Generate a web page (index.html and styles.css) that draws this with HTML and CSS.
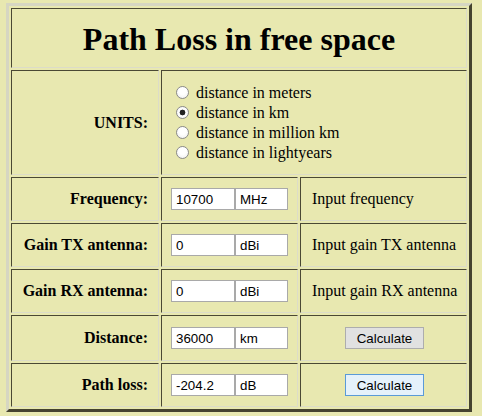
FILE: index.html
```html
<!DOCTYPE html>
<html>
<head>
<meta charset="utf-8">
<title>Path Loss in free space</title>
<link rel="stylesheet" href="styles.css">
</head>
<body>
<table class="calc">
  <tr>
    <td colspan="3" class="title"><h1>Path Loss in free space</h1></td>
  </tr>
  <tr class="units-row">
    <td class="label">UNITS:</td>
    <td colspan="2" class="units">
      <label class="opt"><input type="radio" name="u" class="radio"><span>distance in meters</span></label>
      <label class="opt"><input type="radio" name="u" class="radio" checked><span>distance in km</span></label>
      <label class="opt"><input type="radio" name="u" class="radio"><span>distance in million km</span></label>
      <label class="opt"><input type="radio" name="u" class="radio"><span>distance in lightyears</span></label>
    </td>
  </tr>
  <tr class="row">
    <td class="label c1">Frequency:</td>
    <td class="field c2"><input class="num" type="text" value="10700"><input class="unit" type="text" value="MHz"></td>
    <td class="info c3">Input frequency</td>
  </tr>
  <tr class="row">
    <td class="label">Gain TX antenna:</td>
    <td class="field"><input class="num" type="text" value="0"><input class="unit" type="text" value="dBi"></td>
    <td class="info">Input gain TX antenna</td>
  </tr>
  <tr class="row">
    <td class="label">Gain RX antenna:</td>
    <td class="field"><input class="num" type="text" value="0"><input class="unit" type="text" value="dBi"></td>
    <td class="info">Input gain RX antenna</td>
  </tr>
  <tr class="row row-tall">
    <td class="label">Distance:</td>
    <td class="field"><input class="num" type="text" value="36000"><input class="unit" type="text" value="km"></td>
    <td class="action"><button class="btn" type="button">Calculate</button></td>
  </tr>
  <tr class="row">
    <td class="label">Path loss:</td>
    <td class="field"><input class="num" type="text" value="-204.2"><input class="unit" type="text" value="dB"></td>
    <td class="action"><button class="btn btn-focus" type="button">Calculate</button></td>
  </tr>
</table>
</body>
</html>
```
FILE: styles.css
```css
html, body {
  background: #e8e8b0;
}
body {
  margin: 3px 0 0 6px;
  font-family: "Liberation Serif", "Times New Roman", serif;
  font-size: 16px;
  color: #000;
}
.calc {
  border-collapse: separate;
  border-spacing: 2px;
  border-style: solid;
  border-width: 3px;
  border-color: #d6d6c2 #45432f #45432f #d6d6c2;
  background: #e8e8b0;
}
.calc td {
  box-sizing: border-box;
  border: 1px solid;
  border-color: #4a4834 #dcdcc8 #dcdcc8 #4a4834;
  padding: 0;
  vertical-align: middle;
}
.title {
  height: 60px;
  text-align: center;
}
.title h1 {
  margin: 0;
  padding-top: 2px;
  font-size: 32px;
  font-weight: bold;
  line-height: 36px;
}
.units-row td {
  height: 105px;
}
.row td {
  height: 44px;
}
.row-tall td {
  height: 46px;
}
.c1 { width: 148px; }
.c2 { width: 137px; }
.c3 { width: 167px; }
.label {
  text-align: right;
  font-weight: bold;
  padding-right: 10px !important;
}
.units {
  padding-left: 14px !important;
  padding-top: 1px !important;
}
.opt {
  display: flex;
  align-items: center;
  height: 20px;
  line-height: 20px;
}
.radio {
  -webkit-appearance: none;
  appearance: none;
  box-sizing: border-box;
  width: 13px;
  height: 13px;
  margin: 0 7px 0 0;
  border: 1px solid #8a8a8a;
  border-radius: 50%;
  background: radial-gradient(circle at 50% 35%, #ffffff 40%, #ececec 100%);
  position: relative;
  top: -1px;
}
.radio:checked {
  background: radial-gradient(circle, #222 0, #222 2.6px, #ffffff 3.2px, #f2f2f2 100%);
}
.field {
  padding-left: 9px !important;
  white-space: nowrap;
  font-size: 0;
}
.num, .unit {
  box-sizing: border-box;
  height: 22px;
  margin: 0;
  border: 1px solid #a9a9a9;
  background: #fff;
  padding: 0 4px;
  font-family: "Liberation Sans", Arial, sans-serif;
  font-size: 13.33px;
  color: #000;
  vertical-align: middle;
}
.num { width: 64px; }
.unit { width: 53px; }
.info {
  padding-left: 11px !important;
  text-align: left;
}
.action {
  text-align: center;
}
.btn {
  box-sizing: border-box;
  width: 79px;
  height: 22px;
  margin: 0 0 0 2px;
  padding: 0;
  border: 1px solid #adadad;
  background: #e1e1e1;
  font-family: "Liberation Sans", Arial, sans-serif;
  font-size: 13.33px;
  color: #000;
  vertical-align: middle;
}
.btn-focus {
  border-color: #5a9ad8;
  background: #e5f1fb;
}
```
